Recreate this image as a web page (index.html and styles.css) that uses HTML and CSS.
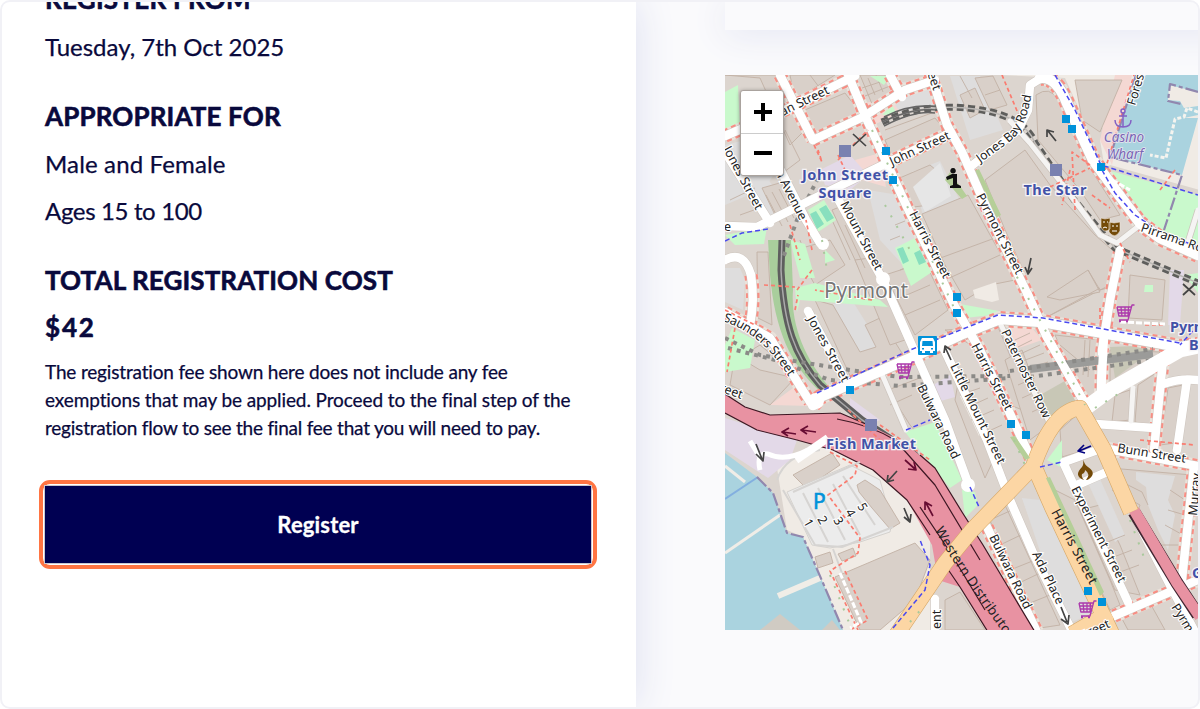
FILE: index.html
```html
<!DOCTYPE html>
<html lang="en">
<head>
<meta charset="utf-8">
<title>Registration</title>
<link rel="stylesheet" href="styles.css">
</head>
<body>
<div class="frame">
  <main class="details">
    <h2 class="h-from">REGISTER FROM</h2>
    <p class="p-date">Tuesday, 7th Oct 2025</p>
    <h2 class="h-for">APPROPRIATE FOR</h2>
    <p class="p-sex">Male and Female</p>
    <p class="p-age">Ages 15 to 100</p>
    <h2 class="h-cost">TOTAL REGISTRATION COST</h2>
    <p class="price">$42</p>
    <div class="note"><span class="n1">The registration fee shown here does not include any fee</span><span class="n2">exemptions that may be applied. Proceed to the final step of the</span><span class="n3">registration flow to see the final fee that you will need to pay.</span></div>
    <div class="highlight"><button class="register">Register</button></div>
  </main>
  <aside class="side">
    <div class="card"></div>
    <div class="map">
      <svg class="tiles" viewBox="725 75 473 555" width="473" height="555">
        <defs>
          <g id="streets">
            <path d="M780 75L813 140"/><path d="M725 136L783 111L855 76"/>
            <path d="M813 140L863 117L905 90L935 80"/><path d="M890 75L902 97"/>
            <path d="M847 72L867 120L907 207L933 260L954 305L980 350L1027 450L1040 480"/>
            <path d="M887 163L950 133"/>
            <path d="M930 72L947 125L962 152L980 193L1007 252L1027 293L1047 337L1087 407"/>
            <path d="M751 275Q755 300 750 325"/>
            <path d="M725 312L770 338L810 402"/>
            <path d="M1120 250L1110 300L1102 350L1101 395"/>
            <path d="M1163 360L1154 450"/>
            <path d="M1103 448L1198 466"/>
            <path d="M1114 616L1198 580"/><path d="M1194 466L1180 598"/>
            <path d="M987 527L1037 632"/>
          </g>
          <g id="lanes">
            <path d="M725 226L757 227L817 197L887 163"/>
            <path d="M970 167L1018 130L1028 110L1030 85L1046 75"/>
            <path d="M725 152L770 223"/><path d="M778 165L806 220L820 243"/>
            <path d="M833 190L870 257L883 280L917 357L945 420L968 483"/>
            <path d="M808 311L850 389"/><path d="M725 260Q744 250 751 275"/>
            <path d="M1187 380L1177 450"/><path d="M1163 384Q1180 378 1198 380"/>
            <path d="M1096 424L1154 428"/>
            <path d="M943 347L987 440L1010 500L1033 553L1070 627"/>
            <path d="M1064 464L1082 503L1128 602"/>
            <path d="M1064 462L1103 448"/><path d="M1077 485L1107 472"/>
            <path d="M1134 515L1170 585L1195 632"/>
            <path d="M935 630V599"/>
          </g>
          <g id="alleys">
            <path d="M1000 323L1048 420"/><path d="M881 372L906 430"/><path d="M1133 388L1131 421"/>
            <path d="M1010 121L1030 143L1063 185L1100 235L1117 243L1140 225"/><path d="M1188 242L1198 210"/>
          </g>
          <g id="major">
            <path d="M813 405L820 397L913 357L960 335L1000 319L1043 322L1180 347L1198 345"/>
            <path d="M1040 78Q1056 76 1067 103L1093 160L1140 223L1160 238L1198 255"/>
          </g>
          <path id="rail" d="M782 240L781 270C784 325 794 355 820 385L862 420L915 455L970 530L1000 590"/>
          <path id="tram" d="M882 122Q925 102 975 109T1035 143L1074 200L1115 248L1198 283"/>
        </defs>
        <rect class="land" x="725" y="75" width="473" height="555"/>
        <!-- open ground -->
        <g class="plot">
          <path d="M725 145L765 135L780 165L765 188L725 205Z"/><path d="M725 268L740 268L745 280L743 310L725 302Z"/>
          <path d="M832 305L850 297L880 345L860 360Z"/><path d="M868 190L905 196L927 248L904 266L880 240Z"/>
          <path d="M912 172L940 161L962 205L925 224Z"/><path d="M950 76L980 76L1003 130L970 140Z"/>
          <path d="M1022 498L1057 520L1100 610L1065 625Z"/>
          <path d="M870 85L925 80L935 105L875 118Z"/><path d="M740 190L765 175L790 210L775 222Z"/>
        </g>
        <g class="pale">
          <path d="M777 468L835 435L880 462L930 535L930 630H843L803 537L787 530Z"/>
          <path d="M1105 170L1100 140L1135 75L1200 75V190L1110 165Z"/>
          <path d="M1000 75H1140L1110 130L1085 122L1065 78Z"/>
        </g>
        <g class="rose">
          <path d="M865 103L890 98L900 112L870 127Z"/><path d="M1065 130L1078 150L1120 215L1095 210L1068 165Z"/>
          <path d="M1010 328L1032 328L1042 340L1013 350Z"/><path d="M1035 305L1055 300L1052 315L1038 318Z"/>
          <path d="M770 405L797 385L812 406Z"/><path d="M855 160L880 153L886 187L862 180Z"/>
          <path d="M1115 75H1132L1112 165L1100 140Z"/>
        </g>
        <g class="lilac">
          <path d="M725 418L797 440L790 460L768 478L725 450Z"/><path d="M820 170L850 155L868 175L850 190L825 185Z"/>
          <path d="M925 390L950 375L955 397L930 404Z"/><path d="M1170 270H1184L1180 325H1168Z"/>
          <path d="M850 398L880 420L870 425L850 410Z"/>
        </g>
        <g class="building">
          <path d="M725 75H778L805 130L790 145L760 78Z"/><path d="M800 112L845 93L862 115L813 136Z"/>
          <path d="M790 75H835L795 100Z"/><path d="M860 75L885 75L897 95L872 104Z"/>
          <path d="M975 78L993 76L1007 105L990 110Z"/><path d="M960 95L975 88L985 110L970 118Z"/>
          <path d="M1075 80H1122L1100 132L1082 120Z"/><path d="M1036 95Q1050 85 1058 100L1088 165L1120 215L1100 220L1080 190L1038 140Z"/>
          <path d="M885 140L935 118L945 130L892 157Z"/><path d="M895 180L930 165L942 175L930 205L905 208Z"/>
          <path d="M985 180L1025 150L1050 185L1095 235L1118 255L1110 285L1045 318L1005 230Z"/>
          <path d="M922 214L968 195L1015 280L990 285L965 300L945 265Z"/>
          <path d="M762 188L790 180L800 205L775 215Z"/><path d="M832 210L845 205L875 270L862 275Z"/>
          <path d="M885 275L925 262L948 310L915 335Z"/><path d="M815 300L833 305L860 352L876 347L865 325L880 318L905 358L852 380Z"/>
          <path d="M855 260L870 258L905 340L890 345Z"/><path d="M795 250L830 240L845 265L815 285Z"/>
          <path d="M757 252L768 252L772 325L758 318Z"/><path d="M735 355L760 370L795 378L770 405L730 385Z"/>
          <path d="M793 475L832 453L840 465L806 488Z"/>
          <path d="M835 577L915 543L930 560L915 600L880 630H860Z"/><path d="M815 557L830 552L833 563L818 568Z"/><path d="M838 554L853 548L856 556L842 561Z"/>
          <path d="M888 390L925 376L955 450L940 460L910 425Z"/><path d="M945 330L998 327L1035 415L1010 405L980 350Z"/>
          <path d="M960 372L998 450L985 478L955 400Z"/><path d="M1005 360L1022 350L1050 425L1030 440Z"/>
          <path d="M1055 335L1100 340L1095 395L1082 400Z"/><path d="M1110 350L1160 352L1150 365L1110 385Z"/>
          <path d="M1060 430L1080 412L1095 447L1062 457Z"/><path d="M1115 395L1130 390V420L1112 422Z"/>
          <path d="M1138 385L1156 373L1152 425L1135 422Z"/><path d="M1168 388L1183 385L1175 443L1160 445Z"/>
          <path d="M1110 468L1192 475L1176 590L1160 560Z"/><path d="M1080 510L1100 505L1120 545L1140 595L1115 590Z"/>
          <path d="M1055 490L1075 500L1110 580L1120 605L1110 610Z"/><path d="M985 510L1005 505L1060 625L1040 628Z"/>
          <path d="M1120 615L1150 603L1165 630H1128Z"/><path d="M1130 275L1165 280L1162 320L1128 318Z"/>
          <path d="M1047 297L1088 270L1100 292L1060 300Z"/><path d="M945 600L960 592L985 630H945Z"/>
        </g>
        <g class="plot">
          <path d="M1022 498L1040 500L1096 610L1068 622Z"/><path d="M1136 472L1175 476L1168 500L1175 515L1168 550L1158 530L1148 505L1146 487L1136 480Z"/>
          <path d="M1088 483L1100 479L1125 535L1115 542Z"/>
        </g>
        <g class="pale">
          <path d="M973 290L996 282L999 300L992 302L975 298Z"/><path class="cool" d="M913 187L940 163L951 196L925 212Z"/>
          <path d="M960 396L967 393L985 430L979 436Z"/>
        </g>
        <g class="detail">
          <path d="M810 75L825 95M862 88L886 80M865 96L895 84M868 78L875 95M876 75L883 92M960 76L972 98M985 95L1000 90M800 240L812 275M730 200L755 188M740 215L765 206M766 195L782 226M772 192L788 222M779 189L794 218M785 187L798 214"/>
          <path d="M885 130L940 110L945 125M895 225L905 221M890 240L900 236M935 260L995 238M945 280L1000 255M1088 270L1100 290L1118 285M1045 318L1100 288"/>
          <path d="M1015 340L1030 333M1018 347L1032 340M1018 355L1040 345M1020 362L1044 353M1022 370L1048 362M960 395L980 388M966 408L988 398M971 420L994 410M980 435L1002 425M890 405L912 395M1018 385L1034 378M1022 398L1040 390M1032 412L1047 405"/>
          <path d="M1112 490L1140 505L1135 520L1150 535M1122 482L1142 492L1148 505M1170 490L1185 500M1168 510L1185 515M1165 525L1183 535M1160 545L1180 545M990 520L1012 510M1000 545L1025 533M1010 570L1035 560M1015 585L1040 573M1025 605L1050 595"/>
          <path d="M1100 545L1125 535M1106 560L1132 550M1112 575L1139 565M900 270L935 255M895 300L930 285M905 315L940 300M1085 340L1083 375M1090 340L1088 377M1060 345L1090 370M735 360L760 345L790 370M785 130L800 160L780 175M832 220L850 260M845 225L865 268"/>
        </g>
        <g class="park">
          <path d="M725 92L738 85L740 128L725 133Z"/><path d="M1107 170L1198 195V250L1160 230L1133 213Z"/>
          <path d="M725 235L767 227L764 244L735 245Z"/><path d="M870 76H890L884 85Z"/><path d="M882 115L892 105L897 114Z"/>
          <path d="M732 328L755 340L750 368L725 372V345Z"/><path d="M795 288L815 283L880 300L888 307L800 300L797 312Z"/>
          <path d="M790 240L805 244L815 278L800 278Z"/><path d="M960 304L1010 313L965 318Z"/>
          <path d="M905 432L935 422L962 480L950 488Z"/><path d="M1047 460L1062 440V468Z"/>
          <path d="M808 210L824 200L836 220L818 232Z"/><path d="M895 248L917 237L932 272L911 286Z"/>
          <path d="M962 490L975 492L978 505L965 518Z"/><path d="M1145 285L1153 285V292L1144 292Z"/>
          <path d="M825 250L835 260L825 263Z"/><path d="M1185 275L1198 273V293Z"/>
        </g>
        <path class="scrub" d="M768 240H791L793 290C790 330 810 365 830 388L822 393C790 365 775 330 770 275Z"/>
        <path class="ground" d="M1042 394L1070 378L1080 402L1048 420Z"/><path class="ground" d="M1110 347L1160 345L1115 378Z"/>
        <!-- water and piers -->
        <path class="water" d="M725 453L757 477L773 493L787 533L803 537L823 583L843 630H725Z"/>
        <path class="water" d="M1136 75H1198V115L1184 118L1198 118L1182 175L1110 157Z"/>
        <path class="pale" d="M1169 85L1198 92V106L1184 108L1180 101L1168 100Z"/>
        <g class="pier"><path d="M725 553L780 515"/><path class="pier-wide" d="M778 596L820 578"/><path d="M725 466L745 482"/></g>
        <path class="rock" d="M760 630L780 614L800 630Z"/><path class="rock" d="M822 630L832 620L840 630Z"/>
        <path class="water-edge" d="M725 499L758 477"/>
        <path class="boundary" d="M757 477L773 493L787 533L803 537L823 583L843 630"/>
        <path class="boundary" d="M1136 75L1110 157L1182 175L1164 230M1198 92L1170 84L1168 101L1181 104"/>
        <path class="floatdock" d="M1198 112L1187 108L1184 117L1175 119L1166 158L1150 155"/>
        <!-- street network -->
        <use href="#streets" class="walk-base"/><use href="#major" class="walk-base major-base"/>
        <use href="#streets" class="walk"/><use href="#major" class="walk major-walk"/>
        <path class="verge" d="M974 171L979 169L1001 215L996 218ZM945 180L950 172L967 196L962 199Z"/>
        <use href="#rail" class="rail"/><use href="#rail" class="rail-mid"/>
        <use href="#tram" class="tram"/><use href="#tram" class="tram-gap"/>
        <path class="yard" d="M882 122Q920 104 945 112M884 117Q915 101 945 108M884 126Q915 110 935 113"/>
        <path class="dots" d="M725 338L760 355L800 362L850 370L900 377L1010 376"/><path class="dots" d="M728 348L775 360L830 380L900 386L1010 378"/>
        <path class="dots" d="M818 178L797 220L783 258"/>
        <use href="#streets" class="case"/><use href="#lanes" class="case"/><use href="#alleys" class="case alley-case"/><use href="#major" class="case major-case"/>
        <use href="#streets" class="road"/><use href="#lanes" class="road"/><use href="#alleys" class="road alley"/><use href="#major" class="road major-road"/>
        <path class="tunnel" d="M1030 369L1153 354"/><path class="tunnel-dots" d="M1010 371L1153 349M1030 377L1153 360"/>
        <path class="road" d="M1027 293L1047 337L1087 407M1104 335L1101 395"/>
        <path class="road wide" d="M1087 407L1110 390L1180 350L1198 346"/>
        <circle class="turn" cx="823" cy="244" r="6"/><circle class="turn" cx="883" cy="279" r="7"/><circle class="turn" cx="968" cy="485" r="7"/><circle class="turn" cx="816" cy="401" r="8"/>
        <g class="court"><path d="M810 214L816 211L824 224L817 229ZM819 209L826 205L834 218L827 222Z"/><path d="M897 249L903 247L909 261L903 264ZM914 253L920 250L926 262L919 265Z"/></g>
        <!-- motorway -->
        <path class="motor" d="M725 394L745 407L770 415L840 413L875 428L905 443L935 468L962 512L983 545L1035 632H988L960 587L938 580L932 545L907 500L873 470L833 450L797 440L757 430L725 413Z"/>
        <path class="motor-line" d="M725 394L745 407L770 415L840 413L875 428M920 455L935 468L962 512L983 545L1035 632M988 632L960 587L945 565M930 535L907 500L873 470L833 450L797 440L757 430L725 413M837 419Q870 425 895 440L935 485L980 560M920 507L950 552L985 610"/>
        <path class="motor-edge" d="M1134 512L1177 583L1198 615"/><path class="motor-thin" d="M1134 510L1177 583L1200 617"/>
        <!-- arterial -->
        <g class="arterial-case"><path d="M895 637L945 563L972 530L1033 467Q1053 410 1080 408L1104 450L1131 512"/><path d="M1034 466L1052 507L1112 634M1072 634L1110 612"/></g>
        <g class="arterial"><path d="M895 637L945 563L972 530L1033 467Q1053 410 1080 408L1104 450L1131 512"/><path d="M1034 466L1052 507L1112 634M1072 634L1110 612"/></g>
        <path class="verge" d="M1046 478L1050 477L1104 592L1100 596ZM1010 437L1015 436L1030 458L1025 460Z"/>
        <!-- fish market car park -->
        <path class="carpark" d="M787 492L850 465L880 480L892 523L890 532L860 542L830 548L812 545Z"/>
        <path class="building" d="M857 485L865 480L880 490L900 523L890 529L872 508L859 492Z"/>
        <path class="lanes" d="M783 490L815 545L842 547L893 527M803 493L828 542M818 488L845 540M833 484L860 535M843 476L875 525M777 480Q785 455 820 450M833 549L842 573M793 492L860 462"/>
        <path class="loop" d="M750 441L761 459M760 470Q756 452 768 454Q785 462 808 450"/><path class="loop thick" d="M796 460L828 438"/>
        <path class="foot" d="M830 452L857 466L855 475L828 495L860 538L858 553L830 571L858 630M845 571L868 620L852 629M848 410L880 440M880 425L930 460M764 285L795 287M797 290L812 270M872 300L815 290M812 250L806 220M795 310L798 295M725 310L755 325M838 155L845 170M814 145L822 162L818 150M1075 210L1072 152L1090 165M1050 187L1090 168M1092 195L1110 208M1070 170L1062 205M1105 170L1134 75M1160 190L1175 170M1145 325L1165 325M1100 308L1100 320M1140 440L1195 445M838 160L868 130M1120 243L1130 262M1002 75L1020 118M735 328L727 372M790 225L800 260"/>
        <path class="foot-white" d="M1120 322L1165 324M1112 180L1130 190M840 573L861 622L850 628"/>
        <path class="cycle" d="M725 241L742 233L768 229M817 393L910 350L998 315L1043 318L1180 343M1055 75L1075 110L1101 165L1198 195M1102 170L1115 193L1135 215L1160 232L1198 247M893 628L925 590L930 565L920 540M1040 467L1062 462M906 430L930 420M1198 325L1180 345M970 487L979 507"/>
        <path class="trees" d="M872 130L955 310M1000 245L1085 405M1095 408L1125 390M830 575L850 625M910 622L925 605M1130 520L1145 560M822 240L827 270M885 205L910 250M1014 440L1025 465"/>
        <!-- direction arrows -->
        <g class="arrows"><path d="M853 134L866 146M866 134L853 146"/><path d="M1183 284L1195 295M1195 284L1183 295"/><path d="M1056 141L1048 131M1047 137V130L1054 132"/><path d="M1031 258L1028 272M1025 267L1028 274L1032 268"/><path d="M951 360L945 347M944 353L945 346L951 350"/><path d="M897 471L888 481M888 475L887 482L894 480"/><path d="M904 508L909 520M904 517L910 522L911 514"/><path d="M1061 607L1067 622M1061 619L1068 624L1069 615"/><path d="M756 444L762 459M756 454L763 461L764 452"/></g>
        <g class="arrows maroon"><path d="M796 434L783 432M789 428L782 432L788 436M816 432L802 430M808 426L801 430L807 434M905 460L915 469M914 462L916 470L908 469M933 516L926 503M925 510L925 502L932 506"/></g>
        <path class="arrows navy" d="M1091 446L1079 451M1084 445L1078 451L1085 453"/>
        <!-- stops -->
        <g class="stop"><path d="M882 147h8v8h-8zM889 176h8v8h-8zM1062 115h8v8h-8zM1068 125h8v8h-8zM1097 163h8v8h-8zM953 293h8v8h-8zM953 309h8v8h-8zM846 386h8v8h-8zM1007 420h8v8h-8zM1022 431h8v8h-8zM1084 587h8v8h-8zM1098 598h8v8h-8z"/></g>
        <path class="station" d="M839 145h12v12h-12zM1050 164h12v12h-12zM865 419h12v12h-12z"/>
        <!-- bus -->
        <rect class="bus" x="918" y="336" width="19" height="19" rx="1"/><path class="bus-in" d="M922 338h11l2 4v9h-2v2h-3v-2h-5v2h-3v-2h-2v-9z"/><path class="bus" d="M922.500 341h10l.5 5h-11zM922 348h2v1.500h-2zM931 348h2v1.500h-2z"/>
        <!-- carts -->
        <g class="cart"><path id="cart" d="M1134.500 305h-2.500l-4 15h-9M1117 307h14M1117.500 310h13M1118 313h11.500M1119 316h10M1117 307l2 9.500M1121 307l1 9.500M1125 307v9.500M1128.500 307l-.5 9.500M1119 321.500h2M1126 321.500h2"/><use href="#cart" x="-220" y="57"/><use href="#cart" x="-38" y="296"/></g>
        <path class="info" d="M953 168a2.800 2.800 0 1 0 .1 0zM946 177l6-3h5v10l4 2v2h-11v-2l3-1v-7l-6 2z"/>
        <path class="anchor" d="M1123 113V127M1119 116H1127M1115 120Q1115 127 1123 127T1131 120"/><circle class="anchor" cx="1123" cy="111" r="2"/>
        <path class="masks" d="M1101 218l4 1 5-1v11q-6 5-9-2zM1109 222l5 1 6-1v9q-5 9-11 1z"/><path class="mask-face" d="M1103 222h2M1107 222h1M1103 228q2-2 4 0M1112 226h2M1116 226h2M1112 231h5"/>
        <path class="flame" d="M1083 459q1 5 5 8q9 6 1 12q-1 1-3 1q5-6-1-10q0 3-3 4q-1 3 2 6q-11-4-2-13q2-3 1-8z"/>
        <g class="street-names">
          <text text-anchor="end" transform="translate(830 93) rotate(-26)">an Street</text>
          <text transform="translate(909 214) rotate(62)" textLength="74">Harris Street</text>
          <text transform="translate(892 166) rotate(-25)" textLength="65">John Street</text>
          <text transform="translate(723 149) rotate(62)" textLength="70">Jones Street</text>
          <text text-anchor="end" transform="translate(800 221) rotate(63)">John Avenue</text>
          <text transform="translate(840 204) rotate(62)" textLength="76">Mount Street</text>
          <text x="724" y="231">e</text>
          <text transform="translate(922 58) rotate(71)">Street</text>
          <path id="jb" class="guide" d="M980 163L1008 143Q1027 130 1032 90"/><text><textPath href="#jb" textLength="89">Jones Bay Road</textPath></text>
          <text transform="translate(976 196) rotate(63)" textLength="89">Pyrmont Street</text>
          <text transform="translate(1135 106) rotate(-73)">Foreshore</text>
          <text transform="translate(1140 231) rotate(19)">Pirrama Road</text>
          <path id="sa" class="guide" d="M723 321Q763 334 790 379"/><text><textPath href="#sa" textLength="88">Saunders Street</textPath></text>
          <text transform="translate(807 319) rotate(61)" textLength="73">Jones Street</text>
          <text text-anchor="end" transform="translate(741 399) rotate(20)">Street</text>
          <text transform="translate(971 346) rotate(62)" textLength="74">Harris Street</text>
          <text transform="translate(1001 332) rotate(64)" textLength="97">Paternoster Row</text>
          <text transform="translate(950 366) rotate(64)" textLength="110">Little Mount Street</text>
          <text transform="translate(917 387) rotate(64)" textLength="81">Bulwara Road</text>
          <text transform="translate(989 537) rotate(64)" textLength="81">Bulwara Road</text>
          <text transform="translate(1032 554) rotate(64)" textLength="57">Ada Place</text>
          <text class="main-name" transform="translate(1051 512) rotate(62)" textLength="83">Harris Street</text>
          <text transform="translate(1071 489) rotate(63)" textLength="106">Experiment Street</text>
          <text transform="translate(1117 452) rotate(9)" textLength="69">Bunn Street</text>
          <text transform="translate(1197 516) rotate(-85)">Murray</text>
          <text transform="translate(1171 607) rotate(58)">Pyrmont</text>
          <text text-anchor="end" transform="translate(1111 627) rotate(-24)">Street</text>
          <text transform="translate(941 629) rotate(-90)">ent</text>
          <path id="wd" class="guide" d="M935 530Q953 565 1007 638"/><text class="main-name"><textPath href="#wd" textLength="132">Western Distributor</textPath></text>
          <text transform="translate(803 522) rotate(60)">1</text><text transform="translate(817 519) rotate(60)">2</text><text transform="translate(833 520) rotate(60)">3</text><text transform="translate(845 512) rotate(60)">4</text><text transform="translate(857 506) rotate(60)">5</text>
        </g>
        <text class="suburb" x="824" y="298" textLength="84">Pyrmont</text>
        <text class="parking" x="813" y="509">P</text>
        <g class="wharf"><text x="1124" y="142">Casino</text><text x="1125" y="159">Wharf</text></g>
        <g class="stations"><text x="845" y="180" textLength="86">John Street</text><text x="845" y="198" textLength="53">Square</text><text x="1055" y="195" textLength="63">The Star</text><text x="871" y="449" textLength="90">Fish Market</text><text class="start" x="1170" y="332">Pyrmont</text><text class="start" x="1189" y="350">Bay</text><text class="start" x="1192" y="578">G</text></g>
      </svg>
      <div class="zoom"><span><i class="plus"></i></span><span><i class="minus"></i></span></div>
    </div>
  </aside>
</div>
</body>
</html>
```

FILE: styles.css
```css
* { box-sizing: border-box; }
body { margin: 0; background: #fff; font-family: Lato, sans-serif; color: #09093c; }
.frame { width: 1200px; height: 709px; border: 2px solid #f1f1f6; border-radius: 10px; overflow: hidden; display: flex; background: #fafafc; }
.details { width: 634px; flex: none; background: #fff; padding: 0 43px; box-shadow: 0 0 38px #dcdff0; white-space: nowrap; }
.details h2, .details p { margin: 0; line-height: 47px; height: 47px; font-size: 24px; font-weight: 400; -webkit-text-stroke: .25px; }
.details h2, .details .price { font-size: 26px; font-weight: 700; -webkit-text-stroke: .6px; }
.details .h-from { margin-top: -26px; letter-spacing: .25px; }
.details .h-for { letter-spacing: .15px; }
.details .h-cost { letter-spacing: .12px; }
.details .p-sex { letter-spacing: .15px; }
.details .p-age { letter-spacing: -.35px; }
.details .price { letter-spacing: 1.800px; }
.details .h-for, .details .h-cost { margin-top: 23px; }
.note { margin-top: 7px; font-size: 19px; line-height: 28px; letter-spacing: -.15px; -webkit-text-stroke: .25px; }
.note span { display: block; }
.n1 { letter-spacing: -.17px; }
.n2 { letter-spacing: -.1px; }
.n3 { letter-spacing: -.22px; }
.highlight { margin: 38px 0 0 -6px; width: 558px; height: 89px; border: 4px solid #ff7543; border-radius: 11px; padding: 2px; }
.register { display: block; width: 546px; height: 77px; margin: 0; padding: 0; border: 0; background: #000052; box-shadow: 0 0 0 1px #c9c8cf; color: #fff; font: 700 22px Lato, sans-serif; letter-spacing: .15px; -webkit-text-stroke: .3px; }
.side { flex: 1; padding-left: 89px; }
.card { height: 28px; background: #fafafc; margin-right: -40px; box-shadow: 0 4px 36px #e3e5f2; }
.map { position: relative; margin-top: 45px; width: 473px; height: 555px; overflow: hidden; }
.tiles { display: block; font-family: "Noto Sans", sans-serif; }
.tiles path { stroke-linejoin: round; }
.zoom { position: absolute; left: 15px; top: 15px; width: 44px; height: 86px; border: 1px solid #aaa39e; border-radius: 3px; background: #fff; box-shadow: 0 1px 4px #0006; }
.zoom span { height: 42px; display: flex; align-items: center; justify-content: center; }
.zoom span + span { border-top: 1px solid #ccc; }
.plus, .minus { width: 18px; height: 4px; background: #000; margin-left: 2px; }
.plus { height: 18px; background: linear-gradient(#000, #000) center / 18px 4px no-repeat, linear-gradient(#000, #000) center / 4px 18px no-repeat; }
.minus { margin-top: -3px; }
.land { fill: #dcd5cf; }
.plot { fill: #dedddd; }
.pale { fill: #f0ebe5; }
.cool { fill: #e6e6e6; }
.rose { fill: #f4d8d3; }
.lilac { fill: #e3d9e8; }
.building { fill: #d9d0c9; stroke: #c2b1a5; stroke-width: .9; }
.detail { fill: none; stroke: #c2b1a5; stroke-width: .9; }
.park { fill: #c9f9cc; }
.court { fill: #88dfbe; }
.scrub { fill: #a9ce9c; }
.verge { fill: #b5cf98; }
.ground { fill: #c8c7b6; }
.water { fill: #aad3df; }
.pier { fill: none; stroke: #f0ede7; stroke-width: 3; }
.pier-wide { stroke-width: 6; }
.rock { fill: #d0cbc3; }
.water-edge { stroke: #83afdf; stroke-width: 2; }
.boundary { fill: none; stroke: #9187ae; stroke-width: 2.200; stroke-dasharray: 13 3 4 3; }
.floatdock { fill: none; stroke: #f5f4ef; stroke-width: 3; stroke-dasharray: 4 2; }
.walk-base { fill: none; stroke: #eae2da; stroke-width: 14; }
.major-base { stroke-width: 16; }
.walk { fill: none; stroke: #f88e84; stroke-width: 13.500; stroke-dasharray: 5 4; }
.major-walk { stroke-width: 16; }
.case { fill: none; stroke: #cdc5be; stroke-width: 9.500; }
.case.major-case { stroke-width: 12; }
.alley-case { stroke-width: 6.500; }
.road { fill: none; stroke: #fff; stroke-width: 8.500; stroke-linecap: round; }
.alley { stroke: #f5f4f3; stroke-width: 5; }
.major-road { stroke-width: 10.500; }
.wide { stroke-width: 15; }
.turn { fill: #fff; }
.rail { fill: none; stroke: #5e5e5e; stroke-width: 7; }
.rail-mid { fill: none; stroke: #aaa; stroke-width: 1.500; }
.tram { fill: none; stroke: #5e5e5c; stroke-width: 7; stroke-dasharray: 7 4; }
.tram-gap { fill: none; stroke: #bbb8b5; stroke-width: 1.500; }
.yard { fill: none; stroke: #666; stroke-width: 1.600; }
.dots, .tunnel-dots { fill: none; stroke: #8b8a87; stroke-width: 4; stroke-dasharray: 4 5; }
.tunnel { stroke: #9b9b99; stroke-width: 8; }
.motor { fill: #e892a2; }
.motor-line { fill: none; stroke: #3d1723; stroke-width: 1.200; }
.motor-edge { fill: none; stroke: #432632; stroke-width: 13; }
.motor-thin { fill: none; stroke: #e892a2; stroke-width: 11; }
.arterial-case { fill: none; stroke: #d6a766; stroke-width: 16; }
.arterial { fill: none; stroke: #fcd6a4; stroke-width: 14.800; }
.carpark { fill: #ececec; stroke: #d5d2ce; }
.lanes { fill: none; stroke: #d6d4d2; stroke-width: 2; }
.loop { fill: none; stroke: #fff; stroke-width: 5; }
.loop.thick { stroke-width: 8; }
.foot { fill: none; stroke: #fa7c70; stroke-width: 1.700; stroke-dasharray: 4 3; }
.foot-white { fill: none; stroke: #fff; stroke-width: 3; stroke-dasharray: 6 2; }
.cycle { fill: none; stroke: #4949ef; stroke-width: 1.500; stroke-dasharray: 5 3; }
.trees { fill: none; stroke: #a9c99c; stroke-width: 2; stroke-dasharray: 2 10; }
.arrows { fill: none; stroke: #444; stroke-width: 1.700; }
.maroon { stroke: #670c32; }
.navy { stroke: #000080; }
.stop { fill: #0092da; }
.station { fill: #7981b0; }
.bus { fill: #0092da; }
.bus-in { fill: #fff; }
.cart { fill: none; stroke: #ac39ac; stroke-width: 1.300; }
.info { fill: #111; }
.anchor { fill: none; stroke: #8461c4; stroke-width: 1.500; }
.masks { fill: #734a08; stroke: #f0e6d9; stroke-width: .6; }
.mask-face { fill: none; stroke: #fff; }
.flame { fill: #734a08; }
.street-names { font-size: 12.500px; fill: #222; stroke: #fff; stroke-width: 2.200; paint-order: stroke; }
.guide { fill: none; stroke: none; }
.main-name { font-size: 13.500px; stroke: none; }
.suburb { font-size: 21px; fill: #777; stroke: #fff; stroke-width: 2; paint-order: stroke; }
.parking { font-size: 21px; fill: #0092da; stroke: #0092da; stroke-width: .6; }
.wharf { font-size: 13.500px; font-style: italic; fill: #7965b4; text-anchor: middle; stroke: #e8e5ef; stroke-width: 1.500; paint-order: stroke; }
.stations { font-size: 14.500px; font-weight: 700; fill: #4252a7; text-anchor: middle; stroke: #f5f3f6; stroke-width: 2.500; paint-order: stroke; }
.stations .start { text-anchor: start; }
```
